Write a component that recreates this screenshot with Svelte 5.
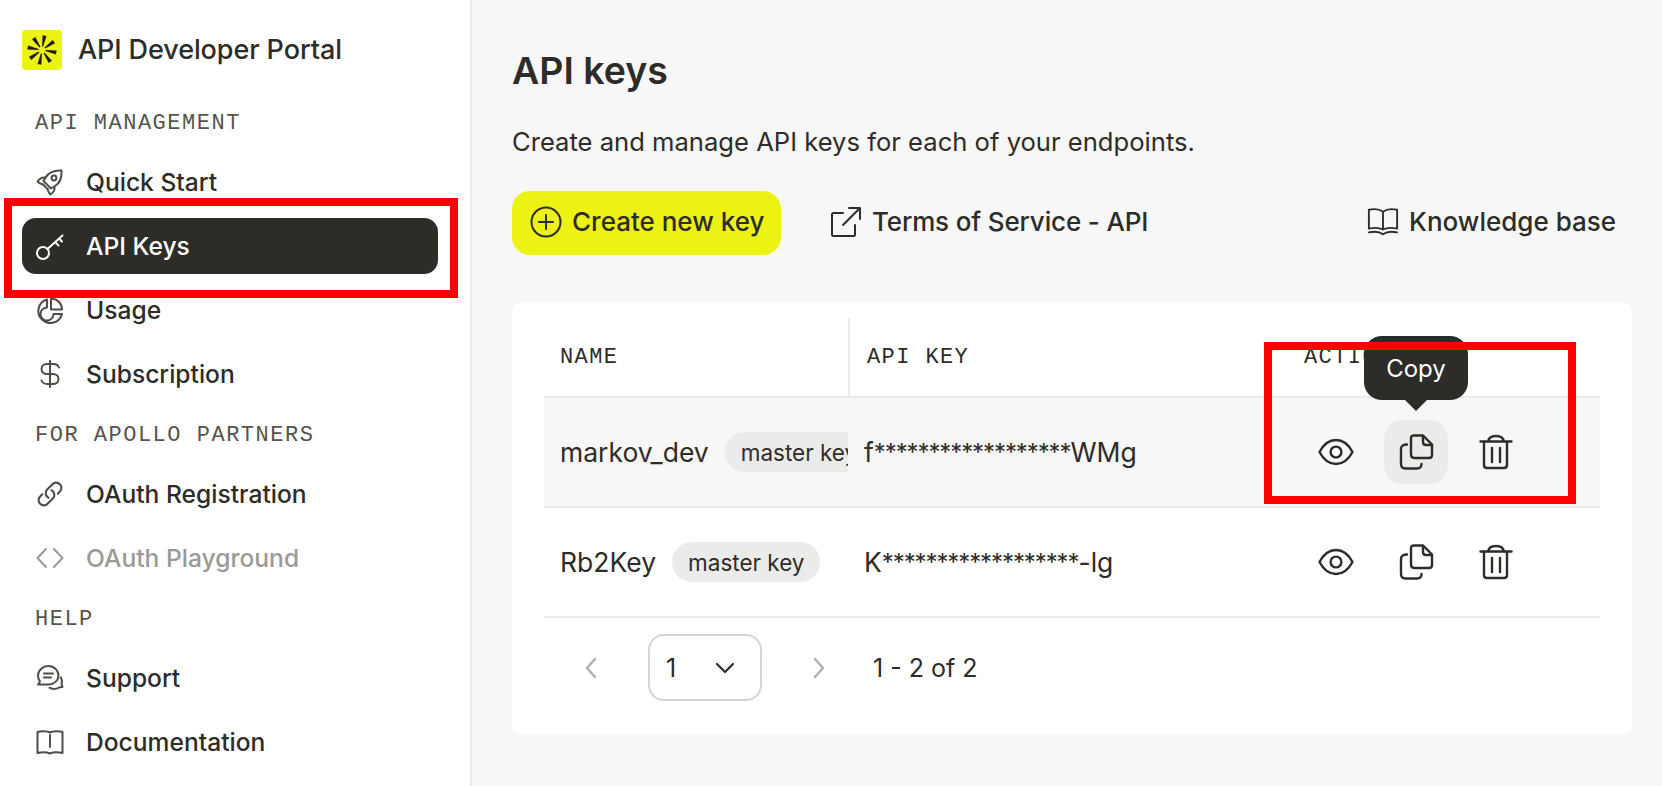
<script lang="ts">
  const rows = [
    { name: "markov_dev", head: "f", tail: "WMg", hover: true },
    { name: "Rb2Key", head: "K", tail: "-lg", hover: false },
  ];
  const stars = "******************";
</script>

{#snippet navIcon(name)}
  <svg class="nav-icon" viewBox="0 0 28 28" fill="none" stroke="currentColor" stroke-width="2" stroke-linecap="round" stroke-linejoin="round">
    {#if name === "rocket"}
      <path d="M25.500 2.500C19 2 13 4 9.500 9.500L7.500 13 15 20.500l3.500-2C24 15 26 9 25.500 2.500Z" />
      <path d="M9.500 9.500C6 9 3.500 10.500 1.500 13.500 3 15 5 16 7 16.500" />
      <path d="M18.500 18.500c.5 3.500-1 6-4 8-1.500-1.500-2.500-3.500-3-5.500" />
      <path d="M7 16.500 11.500 21" />
      <circle cx="18" cy="10" r="2.400" />
    {:else if name === "key"}
      <circle cx="7" cy="21" r="6" />
      <path d="M11.500 17 26.500 3.500M19 10l3.500 3.500M23 6.500l3 3" />
    {:else if name === "chart"}
      <path d="M11 3.500A12 12 0 1 0 26 18H17.500A6.500 6.500 0 1 1 11 11.500Z" />
      <path d="M15 2.500A11 11 0 0 1 26 13.500H15Z" />
    {:else if name === "dollar"}
      <path d="M14 1v26" />
      <path d="M23 7.500C22 5 20 4 17.500 4H11C8 4 5.500 5.800 5.500 9S8 14 11 14h6c3 0 5.500 1.800 5.500 5s-2.500 5-5.500 5H11c-2.500 0-4.500-1-5.500-3.500" />
    {:else if name === "link"}
      <g transform="scale(1.167)">
        <path d="M13.190 8.688a4.500 4.500 0 0 1 1.242 7.244l-4.500 4.500a4.500 4.500 0 0 1-6.364-6.364l1.757-1.757m13.350-.622 1.757-1.757a4.500 4.500 0 0 0-6.364-6.364l-4.500 4.500a4.500 4.500 0 0 0 1.242 7.244" stroke-width="1.800" />
      </g>
    {:else if name === "code"}
      <path d="M10 5 1.500 14l8.500 9M18 5l8.500 9-8.500 9" />
    {:else if name === "chat"}
      <path d="M12.500 2C7 2 2 6 2 11.500c0 2.500.8 4.500 2 6L2 20.500h10.500c5.500 0 10-4 10-9S18 2 12.500 2Z" />
      <path d="M8 9.500h9M8 13.500h7" />
      <path d="M25 13.500c1 2 1 5 .5 6.500l1 3-3 .2c-2 1.800-7 2.500-10 .5" />
    {:else if name === "book"}
      <path d="M14 7v12M14 4.500C11 3 5 3 1.500 4v21c4-1 9-1 12.500.5 3.500-1.500 8.500-1.500 12.500-.5V4C23 3 17 3 14 4.500Z" />
    {/if}
  </svg>
{/snippet}

{#snippet rowActions(hover)}
  <div class="actions">
    <button class="act">
      <svg viewBox="0 0 36 36" fill="none" stroke="currentColor" stroke-width="2.400" stroke-linejoin="round">
        <path d="M1.500 18C6 9.500 12 6 18 6s12 3.500 16.500 12C30 26.500 24 30 18 30S6 26.500 1.500 18Z" />
        <circle cx="18" cy="18" r="5.400" />
      </svg>
    </button>
    <button class="act" class:hot={hover}>
      <svg viewBox="0 0 36 36" fill="none" stroke="currentColor" stroke-width="2.400" stroke-linejoin="round" stroke-linecap="round">
        <path d="M13 20V4.500C13 2.500 14 1.500 16 1.500h9L34 10.500V21c0 2-1 3-3 3H16c-2 0-3-1-3-4Z" />
        <path d="M25 2v6c0 1.500 1 3 3 3h6" />
        <path d="M9 10.500C5 10.500 3 12 3 15v15c0 3 1.500 4.500 4.500 4.500H19c3 0 4.500-1.500 4.500-4.500" />
      </svg>
    </button>
    <button class="act">
      <svg viewBox="0 0 36 36" fill="none" stroke="currentColor" stroke-width="2.400" stroke-linejoin="round" stroke-linecap="round">
        <path d="M2.500 7.500h31M10.500 7.500C10.500 4 13 2 18 2s7.500 2 7.500 5.500" />
        <path d="M6 8v23c0 2 1 3 3 3h17c2 0 3-1 3-3V8" />
        <path d="M14 14v14M22 14v14" />
      </svg>
    </button>
  </div>
{/snippet}

<div class="page">
  <aside class="sidebar">
    <div class="brand">
      <span class="logo">
        <svg viewBox="0 0 40 40" fill="#1d1c18">
          {#each [0, 45, 90, 135, 180, 225, 270, 315] as a}
            <path d="M19.500 16.500 18 5.500h4L20.500 16.500Z" transform="rotate({a + 10} 20 20)" />
          {/each}
        </svg>
      </span>
      <span class="brand-name">API Developer Portal</span>
    </div>
    <nav class="nav">
      <div class="label">API MANAGEMENT</div>
      <a class="item">{@render navIcon("rocket")}<span>Quick Start</span></a>
      <a class="item active">{@render navIcon("key")}<span>API Keys</span></a>
      <a class="item">{@render navIcon("chart")}<span>Usage</span></a>
      <a class="item">{@render navIcon("dollar")}<span>Subscription</span></a>
      <div class="label">FOR APOLLO PARTNERS</div>
      <a class="item">{@render navIcon("link")}<span>OAuth Registration</span></a>
      <a class="item disabled">{@render navIcon("code")}<span>OAuth Playground</span></a>
      <div class="label">HELP</div>
      <a class="item">{@render navIcon("chat")}<span>Support</span></a>
      <a class="item">{@render navIcon("book")}<span>Documentation</span></a>
    </nav>
  </aside>

  <main class="main">
    <h1>API keys</h1>
    <p class="intro">Create and manage API keys for each of your endpoints.</p>

    <div class="toolbar">
      <button class="create">
        <svg viewBox="0 0 32 32" fill="none" stroke="currentColor" stroke-width="2" stroke-linecap="round">
          <circle cx="16" cy="16" r="14.500" />
          <path d="M16 9v14M9 16h14" />
        </svg>
        Create new key
      </button>
      <a class="tool-link terms">
        <svg viewBox="0 0 32 32" fill="none" stroke="currentColor" stroke-width="2" stroke-linecap="round" stroke-linejoin="round">
          <path d="M13 7H3.500C2.500 7 2 7.500 2 8.500v20c0 1 .500 1.500 1.500 1.500h20c1 0 1.500-.500 1.500-1.500V19" />
          <path d="M13 19 30 2M19 2h11v11" />
        </svg>
        Terms of Service - API
      </a>
      <span class="spacer"></span>
      <a class="tool-link">
        <svg viewBox="0 0 34 32" fill="none" stroke="currentColor" stroke-width="2" stroke-linecap="round" stroke-linejoin="round">
          <path d="M17 5v19M17 5C13 2 7 2 2 3v20c5-1 11-1 15 1 4-2 10-2 15-1V3c-5-1-11-1-15 2Z" />
          <path d="M2 27c5-1 11-1 15 2 4-3 10-3 15-2" />
        </svg>
        Knowledge base
      </a>
    </div>

    <section class="card">
      <div class="table">
        <div class="head">
          <div class="cell name-col">NAME</div>
          <div class="cell key-col">API KEY</div>
          <div class="cell act-col">ACTIONS</div>
        </div>
        {#each rows as row}
          <div class="row" class:hover={row.hover}>
            <div class="cell name-col">
              <span class="name">{row.name}</span>
              <span class="pill">master key</span>
            </div>
            <div class="cell key-col"><span>{row.head}<span class="stars">{stars}</span>{row.tail}</span></div>
            <div class="cell act-col">{@render rowActions(row.hover)}</div>
          </div>
        {/each}
      </div>
      <div class="pager">
        <svg class="chev" viewBox="0 0 14 22" fill="none" stroke="currentColor" stroke-width="2.400" stroke-linecap="round" stroke-linejoin="round"><path d="M11 2 3 11l8 9" /></svg>
        <div class="select">
          <span>1</span>
          <svg class="select-chev" viewBox="0 0 20 12" fill="none" stroke="currentColor" stroke-width="2.200" stroke-linecap="round" stroke-linejoin="round"><path d="M2 2l8 8 8-8" /></svg>
        </div>
        <svg class="chev" viewBox="0 0 14 22" fill="none" stroke="currentColor" stroke-width="2.400" stroke-linecap="round" stroke-linejoin="round"><path d="M3 2l8 9-8 9" /></svg>
        <span class="count">1 - 2 of 2</span>
      </div>
    </section>

    <div class="tooltip">Copy</div>
  </main>

  <div class="mark mark-nav"></div>
  <div class="mark mark-actions"></div>
</div>

<style>
  :global(body) {
    margin: 0;
    background: #f7f7f7;
  }
  .page {
    position: relative;
    display: flex;
    height: 786px;
    overflow: hidden;
    font-family: Inter, "Liberation Sans", sans-serif;
    font-size: 24px;
    color: #2e2c28;
  }
  .sidebar {
    box-sizing: border-box;
    width: 472px;
    flex: none;
    padding: 30px 32px 0 22px;
    background: #fff;
    border-right: 2px solid #ebebe9;
  }
  .brand {
    display: flex;
    align-items: center;
    gap: 16px;
    height: 40px;
  }
  .logo {
    display: block;
    width: 40px;
    height: 40px;
    border-radius: 4px;
    background: #ecf312;
  }
  .logo svg {
    display: block;
    width: 40px;
    height: 40px;
  }
  .brand-name {
    font-size: 27px;
    font-weight: 500;
    letter-spacing: -0.1px;
    padding-bottom: 2px;
  }
  .nav {
    display: flex;
    flex-direction: column;
    gap: 8px;
    margin-top: 28px;
  }
  .label {
    box-sizing: border-box;
    height: 48px;
    padding: 2px 0 0 13px;
    display: flex;
    align-items: center;
    font-family: "Liberation Mono", monospace;
    font-size: 22px;
    letter-spacing: 1.5px;
    color: #57544e;
  }
  .item {
    box-sizing: border-box;
    display: flex;
    align-items: center;
    gap: 22px;
    height: 56px;
    padding: 0 14px;
    border-radius: 14px;
    font-size: 24.6px;
    font-weight: 500;
  }
  .item.active {
    background: #2e2c28;
    color: #fff;
  }
  .item.disabled {
    color: #9b9a96;
  }
  .nav-icon {
    width: 28px;
    height: 28px;
    flex: none;
    color: #4f4d48;
  }
  .active .nav-icon {
    color: #fff;
  }
  .disabled .nav-icon {
    color: #9b9a96;
  }
  .main {
    flex: 1;
    min-width: 0;
    padding: 0 30px 0 40px;
  }
  h1 {
    margin: 46px 0 0;
    font-size: 37.5px;
    line-height: 50px;
    font-weight: 600;
  }
  .intro {
    margin: 29px 0 0;
    line-height: 34px;
    font-size: 25.6px;
  }
  .toolbar {
    display: flex;
    align-items: center;
    margin-top: 32px;
    height: 64px;
    padding-right: 16px;
    font-size: 26px;
    font-weight: 500;
  }
  .create {
    display: flex;
    align-items: center;
    gap: 10px;
    height: 64px;
    width: 269px;
    box-sizing: border-box;
    padding: 0 16px 3px 18px;
    border: none;
    border-radius: 18px;
    background: #ecf312;
    color: inherit;
    font: inherit;
    white-space: nowrap;
  }
  .create svg {
    width: 32px;
    height: 32px;
    flex: none;
  }
  .tool-link {
    display: flex;
    align-items: center;
    gap: 10px;
    padding-bottom: 3px;
  }
  .tool-link svg {
    width: 32px;
    height: 32px;
    flex: none;
  }
  .terms {
    margin-left: 49px;
    letter-spacing: -0.15px;
  }
  .spacer {
    flex: 1;
  }
  .card {
    box-sizing: border-box;
    margin-top: 47px;
    height: 432px;
    padding: 16px 32px 0;
    background: #fff;
    border-radius: 10px;
  }
  .head {
    display: flex;
    height: 78px;
    border-bottom: 2px solid #ebebe9;
    font-family: "Liberation Mono", monospace;
    font-size: 22px;
    letter-spacing: 1.4px;
  }
  .row {
    display: flex;
    height: 108px;
    border-bottom: 2px solid #ebebe9;
    font-size: 26.5px;
  }
  .row.hover {
    background: #f7f7f7;
  }
  .cell {
    box-sizing: border-box;
    display: flex;
    align-items: center;
    padding: 0 16px;
    overflow: hidden;
    white-space: nowrap;
  }
  .name-col {
    width: 304px;
    flex: none;
    padding-right: 0;
  }
  .head .name-col {
    width: 306px;
    border-right: 2px solid #ebebe9;
  }
  .key-col {
    width: 438px;
    flex: none;
  }
  .head .key-col {
    padding-left: 17px;
  }
  .row .key-col {
    width: 440px;
  }
  .stars {
    font-size: 24px;
    letter-spacing: -1.1px;
    vertical-align: 1px;
  }
  .act-col {
    flex: 1;
  }
  .name {
    margin-right: 16px;
  }
  .pill {
    flex: none;
    display: flex;
    align-items: center;
    height: 40px;
    padding: 0 16px;
    border-radius: 20px;
    background: #ebebe9;
    font-size: 22.5px;
  }
  .actions {
    display: flex;
    gap: 16px;
  }
  .act {
    display: flex;
    align-items: center;
    justify-content: center;
    width: 64px;
    height: 64px;
    padding: 0;
    border: none;
    border-radius: 18px;
    background: none;
    color: #2e2c28;
  }
  .act.hot {
    background: #ebebe9;
  }
  .act svg {
    width: 36px;
    height: 36px;
  }
  .pager {
    display: flex;
    align-items: center;
    height: 67px;
    margin-top: 16px;
    padding-left: 40px;
    font-size: 25px;
  }
  .chev {
    width: 14px;
    height: 22px;
    flex: none;
    color: #b0afab;
  }
  .select {
    box-sizing: border-box;
    display: flex;
    align-items: center;
    justify-content: space-between;
    width: 114px;
    height: 67px;
    margin: 0 50px 0 50px;
    padding: 0 25px 0 16px;
    border: 2px solid #d5d5d3;
    border-radius: 16px;
  }
  .select-chev {
    width: 20px;
    height: 12px;
  }
  .count {
    margin-left: 47px;
  }
  .tooltip {
    position: absolute;
    left: 1364px;
    top: 336px;
    box-sizing: border-box;
    width: 104px;
    height: 64px;
    display: flex;
    align-items: center;
    justify-content: center;
    border-radius: 18px;
    background: #2e2c28;
    color: #fff;
  }
  .tooltip::after {
    content: "";
    position: absolute;
    left: 40px;
    bottom: -11px;
    border-left: 12px solid transparent;
    border-right: 12px solid transparent;
    border-top: 12px solid #2e2c28;
  }
  .mark {
    position: absolute;
    box-sizing: border-box;
    border: 8px solid #ff0000;
    pointer-events: none;
  }
  .mark-nav {
    left: 4px;
    top: 198px;
    width: 454px;
    height: 100px;
  }
  .mark-actions {
    left: 1264px;
    top: 342px;
    width: 312px;
    height: 162px;
  }
</style>
